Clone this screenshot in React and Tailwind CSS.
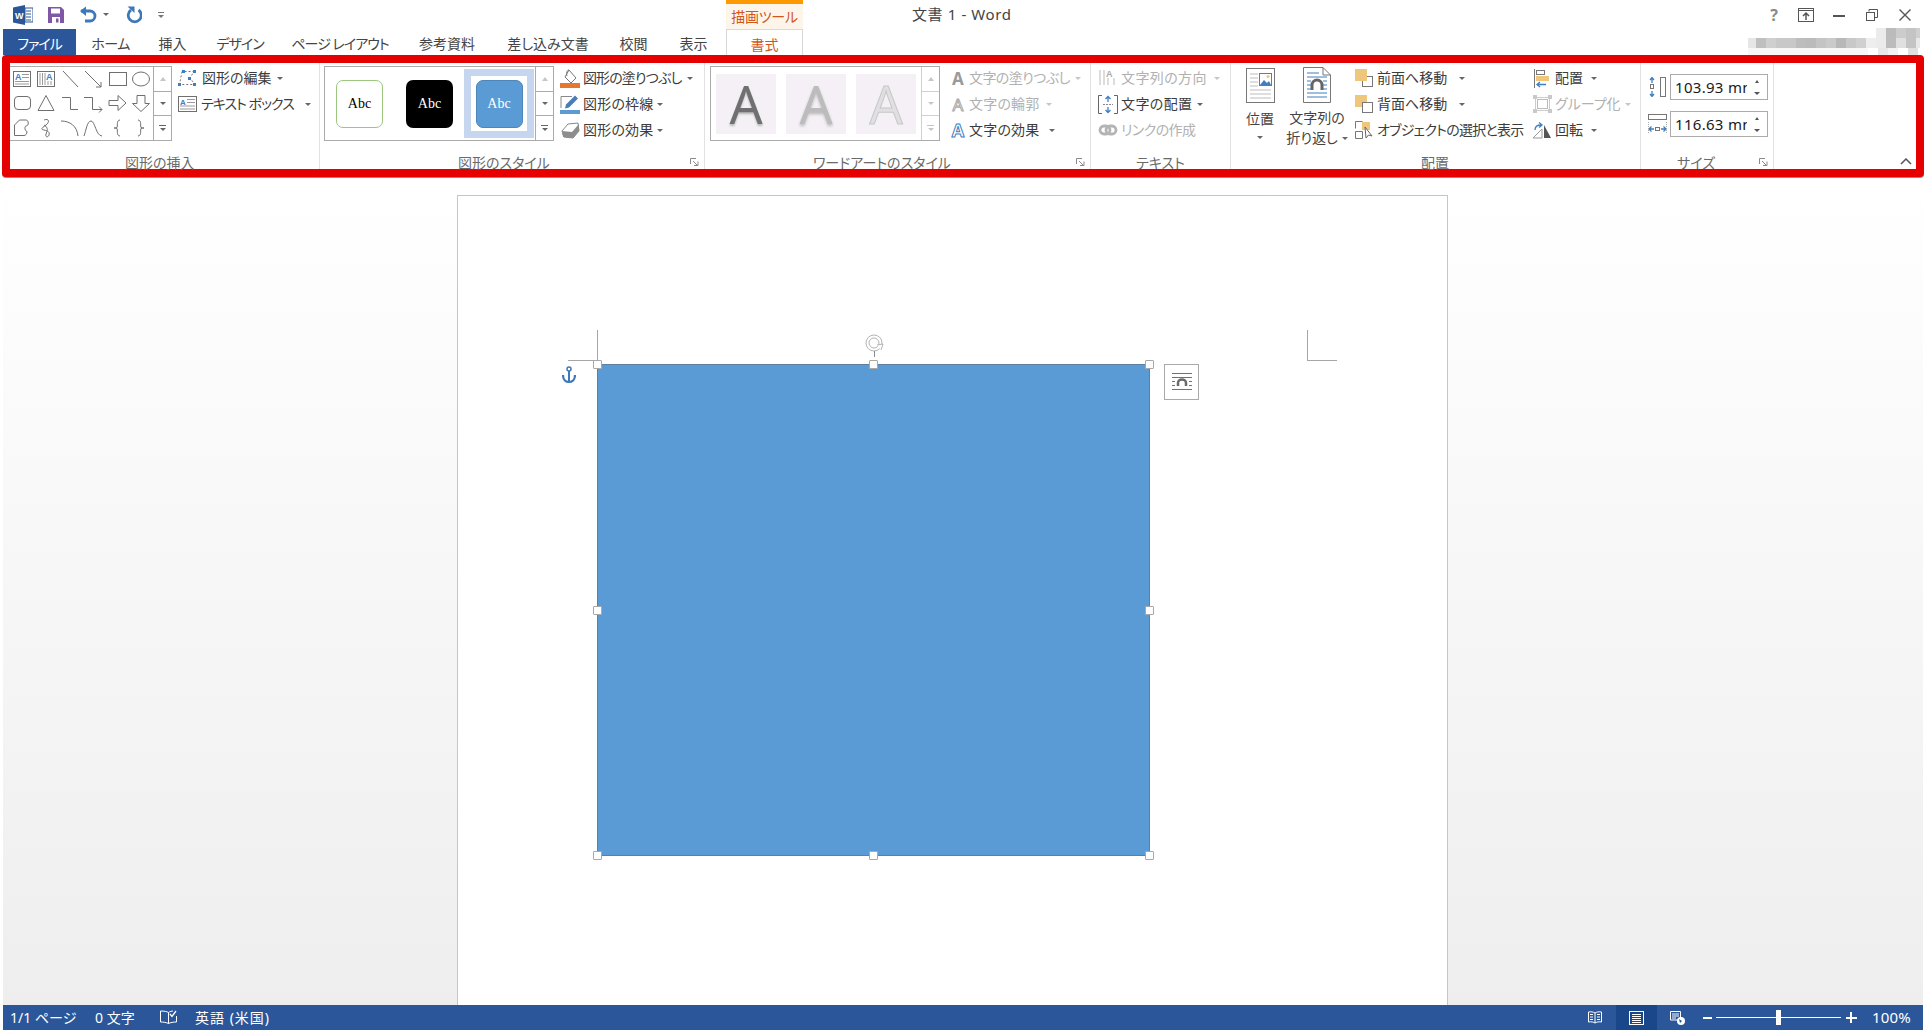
const GRAY = "#6f6f6f";
const BLUE = "#3f7fc1";
const TAN = "#eec67c";

function Svg({ w = 20, h = 20, children, className = "" }) {
  return (
    <svg width={w} height={h} viewBox={`0 0 ${w} ${h}`} fill="none" className={`shrink-0 ${className}`}>
      {children}
    </svg>
  );
}

function Caret({ className = "", color = "border-t-[#666666]" }) {
  return <span className={`inline-block w-0 h-0 border-x-[3px] border-x-transparent border-t-[3px] ${color} ${className}`} />;
}

// insert-shape gallery: one drawing per shape
const SHAPES = [
  <>
    <rect x="2.5" y="3.5" width="17" height="15" stroke={GRAY} />
    <text x="4" y="12" fontSize="9" fontWeight="700" fill={BLUE} fontFamily="Liberation Sans">A</text>
    <path d="M11 6.5h7M11 9.5h7M4 13.5h14M4 16h14" stroke="#999" />
  </>,
  <>
    <rect x="2.5" y="3.5" width="17" height="15" stroke={GRAY} />
    <text x="11" y="12" fontSize="9" fontWeight="700" fill={BLUE} fontFamily="Liberation Sans">A</text>
    <path d="M5 5v12M7.500 5v12M10 5v12M13 13v4M16 13v4" stroke="#999" />
  </>,
  <path d="M4 3l15 16" stroke={GRAY} />,
  <path d="M3 3l16 16M19 19v-5M19 19h-5" stroke={GRAY} />,
  <rect x="3.500" y="4.500" width="17" height="13" stroke={GRAY} />,
  <ellipse cx="11" cy="11" rx="8.500" ry="7" stroke={GRAY} />,
  <rect x="3.500" y="4.500" width="16" height="13" rx="3.500" stroke={GRAY} />,
  <path d="M11 3.500L3 18.500h16z" stroke={GRAY} />,
  <path d="M3 5.500h8.500v12H19" stroke={GRAY} />,
  <path d="M2 5.500h8.500v12H20M17 14.500l3 3-3 3" stroke={GRAY} />,
  <path d="M3 8.500h9v-5l8 7.500-8 7.500v-5H3z" stroke={GRAY} />,
  <path d="M7 3.500h8v8h4.500L11 19.500 2.500 11.500H7z" stroke={GRAY} />,
  <path d="M3.500 18.500V8l5-5h6.500c3 0 3 6 0 6-1.500 0-1.500 5 1 5.500 0 2-1 4-3 4z" stroke={GRAY} />,
  <path d="M9 3c5-2 6 2 2 5S5 12 9 13c4 1 6 2 5 5s-4 2-3-1 3-6-2-9" stroke={GRAY} />,
  <path d="M2 4c9 0 16 5 17 15" stroke={GRAY} />,
  <path d="M2 19C4 14 5 4 9 4s5 15 11 15" stroke={GRAY} />,
  <path d="M14 3c-4 0-2 7-3 7.500-1 .5-2 .5-3 .5 1 0 2 0 3 .5 1 .5-1 7.500 3 7.500" stroke={GRAY} />,
  <path d="M8 3c4 0 2 7 3 7.500 1 .5 2 .5 3 .5-1 0-2 0-3 .5-1 .5 1 7.500-3 7.500" stroke={GRAY} />,
];

function ScrollColumn() {
  return (
    <div className="w-[18px] flex flex-col border-l border-[#ababab]">
      <div className="flex-1 flex items-center justify-center">
        <span className="w-0 h-0 border-x-[3px] border-x-transparent border-b-[4px] border-b-[#c6c6c6]" />
      </div>
      <div className="flex-1 flex items-center justify-center border-y border-[#ababab]">
        <Caret />
      </div>
      <div className="flex-1 flex flex-col items-center justify-center gap-[2px]">
        <span className="w-[7px] h-px bg-[#666666]" />
        <Caret />
      </div>
    </div>
  );
}

function ScrollColumnOff() {
  return (
    <div className="w-[18px] flex flex-col border-l border-[#d0d0d0]">
      <div className="flex-1 flex items-center justify-center">
        <span className="w-0 h-0 border-x-[3px] border-x-transparent border-b-[4px] border-b-[#c6c6c6]" />
      </div>
      <div className="flex-1 flex items-center justify-center border-y border-[#d0d0d0]">
        <Caret color="border-t-[#c6c6c6]" />
      </div>
      <div className="flex-1 flex flex-col items-center justify-center gap-[2px]">
        <span className="w-[7px] h-px bg-[#c6c6c6]" />
        <Caret color="border-t-[#c6c6c6]" />
      </div>
    </div>
  );
}

function RowBtn({ icon, iconW = "w-[20px]", gap = "gap-[3px]", label, caret = true, caretGap = "ml-[4px]", off = false, track = "" }) {
  return (
    <div className={`h-[26px] flex items-center ${gap}`}>
      <span className={`${iconW} flex justify-center shrink-0`}>{icon}</span>
      <span className={`text-[14px] pb-[2px] whitespace-nowrap ${track} ${off ? "text-[#b1b1b1]" : "text-[#3c3c3c]"}`}>{label}</span>
      {caret && <Caret className={caretGap} color={off ? "border-t-[#c6c6c6]" : "border-t-[#666666]"} />}
    </div>
  );
}

function Group({ w, label, labelCenter, launcher, children, last }) {
  return (
    <div className={`${w} relative shrink-0 h-full ${last ? "" : "border-r border-[#e1e1e1]"}`}>
      <div className="h-[91px]">{children}</div>
      <div className={`absolute bottom-[-4px] h-[20px] flex justify-center text-[14px] leading-[20px] text-[#6a6a6a] whitespace-nowrap ${labelCenter}`}>{label}</div>
      {launcher && (
        <svg width="9" height="9" viewBox="0 0 9 9" fill="none" className="absolute right-[5px] bottom-[2px]">
          <path d="M.500 6V.500H6M3 3l4 4M4 7.500h4v-4" stroke="#8a8a8a" />
        </svg>
      )}
    </div>
  );
}

function AbcItem({ box, text }) {
  return (
    <div className={`w-[47px] h-[48px] rounded-[7px] flex items-center justify-center text-[14px] [font-family:'Liberation_Serif',serif] ${box} ${text}`}>
      Abc
    </div>
  );
}

function SpinField({ value, icon }) {
  return (
    <div className="flex items-center gap-[4px]">
      <span className="w-[18px] flex justify-center">{icon}</span>
      <div className="w-[98px] h-[26px] border border-[#ababab] bg-white flex items-center pl-[4px] overflow-hidden relative">
        <span className="text-[15px] text-[#1a1a1a] whitespace-nowrap tracking-[0.3px]">{value}</span>
        <div className="absolute right-0 top-0 bottom-0 w-[20px] bg-white flex flex-col items-center justify-center gap-[9px]">
          <span className="w-0 h-0 border-x-[2.500px] border-x-transparent border-b-[3px] border-b-[#555555]" />
          <Caret color="border-t-[#555555]" className="border-x-[2.500px]" />
        </div>
      </div>
    </div>
  );
}

const TABS = [
  ["w-[67px]", "ホーム", "tracking-[-0.500px]"],
  ["w-[57px]", "挿入", ""],
  ["w-[78px]", "デザイン", "tracking-[-1px]"],
  ["w-[122px]", "ページ レイアウト", "tracking-[-1px]"],
  ["w-[92px]", "参考資料", ""],
  ["w-[110px]", "差し込み文書", ""],
  ["w-[61px]", "校閲", ""],
  ["w-[59px]", "表示", ""],
];

const MOSAIC_MID = [
  "w-[8px] bg-[#e6e6e6]", "w-[10px] bg-[#bfbfbf]", "w-[10px] bg-[#cfcfcf]", "w-[10px] bg-[#c8c8c8]", "w-[10px] bg-[#c8c8c8]",
  "w-[10px] bg-[#bdbdbd]", "w-[10px] bg-[#bbbbbb]", "w-[10px] bg-[#c4c4c4]", "w-[10px] bg-[#cacaca]", "w-[10px] bg-[#b8b8b8]",
  "w-[10px] bg-[#c8c8c8]", "w-[10px] bg-[#d0d0d0]", "w-[10px] bg-[#eeeeee]", "w-[10px] bg-[#ebebeb]", "w-[10px] bg-[#bcbcbc]",
  "w-[10px] bg-[#e0e0e0]", "w-[10px] bg-[#c4c4c4]", "w-[4px] bg-[#e8e8e8]",
];

function Mosaic() {
  return (
    <div className="ml-auto mr-[8px] mt-[-1px] flex flex-col h-[27px] w-[172px]">
      <div className="h-[10px] flex justify-end">
        <span className="w-[10px] bg-[#ebebeb]" />
        <span className="w-[10px] bg-[#bbbbbb]" />
        <span className="w-[10px] bg-[#cccccc]" />
        <span className="w-[10px] bg-[#c4c4c4]" />
        <span className="w-[4px] bg-[#d0d0d0]" />
      </div>
      <div className="h-[10px] flex">
        {MOSAIC_MID.map((c, i) => (
          <span key={i} className={c} />
        ))}
      </div>
      <div className="h-[7px] flex justify-end">
        <span className="w-[120px] bg-[#f7f7f7]" />
        <span className="w-[10px] bg-[#ffffff]" />
        <span className="w-[10px] bg-[#e8e8e8]" />
        <span className="w-[10px] bg-[#f2f2f2]" />
        <span className="w-[10px] bg-[#ffffff]" />
        <span className="w-[10px] bg-[#e0e0e0]" />
        <span className="w-[2px] bg-[#ffffff]" />
      </div>
    </div>
  );
}

function Handle({ className }) {
  return <span className={`absolute w-[9px] h-[9px] bg-white border border-[#a8a8a8] rounded-[1px] ${className}`} />;
}

function WrapGlyph({ w = 22, h = 22, color = BLUE }) {
  return (
    <svg width={w} height={h} viewBox="0 0 22 22" fill="none">
      <path d="M1 2.500h20M1 6.500h20M1 10.500h3M18 10.500h3M1 14.500h3M18 14.500h3M1 18.500h20" stroke={color} />
      <path d="M7 15v-3a4 3.500 0 0 1 8 0v3" stroke="#6b6b6b" strokeWidth="2.500" />
    </svg>
  );
}

export default function App() {
  return (
    <div className="relative w-[1928px] h-[1030px] overflow-hidden bg-white flex flex-col font-['Noto_Sans','Noto_Sans_CJK_JP',sans-serif] [font-feature-settings:'palt'] text-[#444444]">
      {/* title bar */}
      <div className="h-[29px] shrink-0 flex items-start">
        <div className="w-[726px] h-full flex items-center relative pl-[13px]">
          <Svg w={20} h={20}>
            <path d="M0 2.500L12 0v20L0 17.500z" fill="#2b579a" />
            <path d="M12 3h8v14h-8z" fill="#fff" stroke="#2b579a" />
            <path d="M13 6h5M13 9h5M13 12h5M13 15h5" stroke="#2b579a" />
            <text x="2" y="14" fontSize="9" fontWeight="700" fill="#fff" fontFamily="Liberation Sans">W</text>
          </Svg>
          <Svg w={16} h={16} className="ml-[15px]">
            <path d="M0 0h13l3 3v13H0z" fill="#7e57a6" />
            <path d="M3 1.500h9v5H3z" fill="#fff" />
            <path d="M4 10h8v6H4z" fill="#fff" />
            <path d="M8 11.500h2.500v4H8z" fill="#7e57a6" />
          </Svg>
          <Svg w={19} h={17} className="ml-[15px]">
            <path d="M2 5h9a5 5 0 0 1 0 10H6" stroke="#3d78b8" strokeWidth="2.800" />
            <path d="M7 .500L1 5l6 5z" fill="#3d78b8" />
          </Svg>
          <Caret className="ml-[5px]" />
          <Svg w={17} h={19} className="ml-[16px]">
            <path d="M6 5a6.500 6.500 0 1 0 7.500 0" stroke="#3d78b8" strokeWidth="2.800" />
            <path d="M2.500 1.500h7v6.500z" fill="#3d78b8" />
          </Svg>
          <span className="ml-[16px] flex flex-col items-center gap-[2px]">
            <span className="w-[6px] h-px bg-[#777777]" />
            <Caret color="border-t-[#777777]" />
          </span>
        </div>
        <div className="w-[77px] h-full bg-[#fef5ea] border-t-4 border-[#ff9900] flex items-center justify-center text-[14px] tracking-[-0.300px] text-[#d2561a]">描画ツール</div>
        <div className="w-[109px]" />
        <div className="h-full w-[98px] flex items-center text-[15px] tracking-[0.600px] text-[#444444] whitespace-nowrap [font-feature-settings:normal]">文書 1 - Word</div>
        <div className="flex-1 h-full flex items-center justify-end pr-[17px]">
          <span className="text-[16px] font-bold text-[#8a8a8a] mr-[20px] leading-none">?</span>
          <Svg w={16} h={14} className="mr-[19px]">
            <rect x=".500" y=".500" width="15" height="13" stroke="#555" />
            <path d="M1 2.500h14" stroke="#555" />
            <path d="M8 12V5M5 8l3-3 3 3" stroke="#555" strokeWidth="1.500" />
          </Svg>
          <span className="w-[12px] h-[2px] bg-[#555555] mt-[3px] mr-[21px]" />
          <Svg w={12} h={12} className="mr-[21px]">
            <path d="M3 2.500V.500h8.500v8h-2.500" stroke="#555" />
            <rect x=".500" y="3.500" width="8" height="8" stroke="#555" />
          </Svg>
          <Svg w={12} h={12}>
            <path d="M.500.500l11 11M11.500.500l-11 11" stroke="#555" strokeWidth="1.400" />
          </Svg>
        </div>
      </div>

      {/* tabs */}
      <div className="h-[26px] shrink-0 flex pl-[3px] text-[14px] text-[#444444] leading-[30px]">
        <div className="w-[73px] bg-[#2b579a] text-white text-center tracking-[-1px]">ファイル</div>
        <div className="w-[1px]" />
        {TABS.map(([w, t, track]) => (
          <div key={t} className={`${w} ${track} text-center whitespace-nowrap`}>{t}</div>
        ))}
        <div className="w-[3px]" />
        <div className="w-[77px] bg-white border-x border-t border-[#d8d8d8] text-center text-[#d2561a]">書式</div>
        <Mosaic />
      </div>

      {/* ribbon */}
      <div className="relative z-10 h-[122px] shrink-0 ml-[2px] mr-[4px] border-8 border-[#e60000] rounded-[4px] bg-white flex shadow-[0_1px_0_#909090]">
        {/* 図形の挿入 */}
        <Group w="w-[310px]" label="図形の挿入" labelCenter="left-[115px]">
          <div className="flex items-start pt-[3px]">
            <div className="w-[162px] h-[75px] border-y border-r border-[#ababab] flex">
              <div className="w-[144px] grid grid-cols-6 grid-rows-3">
                {SHAPES.map((s, i) => (
                  <span key={i} className="flex items-center justify-center">
                    <Svg w={22} h={22}>{s}</Svg>
                  </span>
                ))}
              </div>
              <ScrollColumn />
            </div>
            <div className="ml-[6px] mt-[-1px]">
              <RowBtn
                label="図形の編集"
                gap="gap-[4px]"
                caretGap="ml-[1px]"
                icon={
                  <Svg w={20} h={18}>
                    <path d="M4 2.500L1.500 15.500H17L12 9l4-6.500z" stroke="#777" strokeDasharray="2 2" />
                    <path d="M0 14h3v3H0zM4 1h3v3H4zM15 1h3v3h-3zM10 8h3v3h-3zM15 14h3v3h-3z" fill={BLUE} />
                  </Svg>
                }
              />
              <RowBtn
                label="テキスト ボックス"
                track="tracking-[-1px]"
                gap="gap-[3px]"
                caretGap="ml-[8px]"
                icon={
                  <Svg w={20} h={16}>
                    <rect x=".500" y=".500" width="18" height="15" stroke={GRAY} />
                    <text x="2" y="8.500" fontSize="8" fontWeight="700" fill={BLUE} fontFamily="Liberation Sans">A</text>
                    <path d="M9 3.500h8M9 6.500h8M2 10h15M2 13h15" stroke="#999" />
                  </Svg>
                }
              />
            </div>
          </div>
        </Group>

        {/* 図形のスタイル */}
        <Group w="w-[385px]" label="図形のスタイル" labelCenter="left-[138px]" launcher>
          <div className="flex items-start pt-[3px] pl-[4px]">
            <div className="w-[230px] h-[75px] border border-[#ababab] flex">
              <div className="w-[211px] flex items-center pl-[11px]">
                <AbcItem box="bg-white border border-[#9bc87e]" text="text-black" />
                <div className="w-[23px]" />
                <AbcItem box="bg-black" text="text-white" />
                <div className="ml-[11px] w-[70px] h-[69px] border-[7px] border-[#c6d6ef] bg-white flex items-center justify-center">
                  <AbcItem box="bg-[#5b9bd5] border border-[#4d86b8]" text="text-white" />
                </div>
              </div>
              <ScrollColumn />
            </div>
            <div className="ml-[6px] mt-[-1px]">
              <RowBtn
                label="図形の塗りつぶし"
                track="tracking-[-0.900px]"
                caretGap="ml-[3px]"
                icon={
                  <Svg w={20} h={19}>
                    <path d="M9 1l7 8-5 5-6-6z" stroke="#777" fill="#fff" />
                    <path d="M9 1c-2 0-3 3-2 6" stroke="#777" />
                    <rect x="0" y="14" width="20" height="5" fill="#e7772f" />
                  </Svg>
                }
              />
              <RowBtn
                label="図形の枠線"
                track="tracking-[0.200px]"
                caretGap="ml-0"
                icon={
                  <Svg w={20} h={19}>
                    <path d="M1 13V1.500h11" stroke="#888" />
                    <path d="M15 .500l3 3-9 9-4 1 1-4z" fill="#4a7db8" />
                    <rect x="0" y="15" width="20" height="4" fill="#5b9bd5" />
                  </Svg>
                }
              />
              <RowBtn
                label="図形の効果"
                track="tracking-[0.200px]"
                caretGap="ml-0"
                icon={
                  <Svg w={19} h={17}>
                    <path d="M1 9l6-7 10-1 1 8-6 7-9-1z" fill="#fff" stroke="#888" />
                    <path d="M1 9l10 1 7-8v7l-6 7-10-1z" fill="#8d8d8d" />
                  </Svg>
                }
              />
            </div>
          </div>
        </Group>

        {/* ワードアートのスタイル */}
        <Group w="w-[386px]" label="ワードアートのスタイル" labelCenter="left-[108px]" launcher>
          <div className="flex items-start pt-[3px] pl-[5px]">
            <div className="w-[230px] h-[75px] border border-[#ababab] flex">
              <div className="w-[211px] flex items-center pl-[5px] gap-[10px]">
                <div className="w-[60px] h-[60px] bg-[#f4f0f6] flex items-center justify-center text-[52px] leading-none text-[#707070] [text-shadow:0_2px_2px_#bbbbbb]">A</div>
                <div className="w-[60px] h-[60px] bg-[#f4f0f6] flex items-center justify-center text-[52px] leading-none text-[#bcbcbc] [text-shadow:0_2px_3px_#bbbbbb]">A</div>
                <div className="w-[60px] h-[60px] bg-[#f4f0f6] flex items-center justify-center text-[52px] leading-none text-[#e2dfe3] [-webkit-text-stroke:1px_#c8c8c8]">A</div>
              </div>
              <ScrollColumnOff />
            </div>
            <div className="ml-[10px] mt-[-1px]">
              <RowBtn
                off
                label="文字の塗りつぶし"
                track="tracking-[-0.600px]"
                iconW="w-[16px]"
                caretGap="ml-[2px]"
                icon={<span className="text-[17px] font-bold leading-none text-[#9a9a9a]">A</span>}
              />
              <RowBtn
                off
                label="文字の輪郭"
                track="tracking-[0.200px]"
                iconW="w-[16px]"
                caretGap="ml-[3px]"
                icon={<span className="text-[17px] leading-none text-white [-webkit-text-stroke:1px_#aaaaaa]">A</span>}
              />
              <RowBtn
                label="文字の効果"
                track="tracking-[0.200px]"
                iconW="w-[16px]"
                caretGap="ml-[6px]"
                icon={<span className="text-[18px] font-bold leading-none text-white [-webkit-text-stroke:1px_#3f7fc1]">A</span>}
              />
            </div>
          </div>
        </Group>

        {/* テキスト */}
        <Group w="w-[140px]" label="テキスト" labelCenter="left-[45px]">
          <div className="pt-[2px] pl-[7px]">
            <RowBtn
              off
              label="文字列の方向"
              track="tracking-[0.400px]"
              caretGap="ml-[4px]"
              icon={
                <Svg w={20} h={18}>
                  <path d="M2 1v15M6 1v15M10 9v7M16 9v7" stroke="#bbb" />
                  <text x="8" y="8" fontSize="9" fontWeight="700" fill="#aaa" fontFamily="Liberation Sans">A</text>
                </Svg>
              }
            />
            <RowBtn
              label="文字の配置"
              track="tracking-[0.400px]"
              caretGap="ml-[1px]"
              icon={
                <Svg w={20} h={19}>
                  <path d="M4 .500H.500v18H4M16 .500h3.500v18H16" stroke="#666" />
                  <path d="M5 9.500h10" stroke="#888" strokeDasharray="2 1" />
                  <path d="M10 7V2M7.500 4L10 1.500 12.500 4M10 12v5M7.500 15l2.500 2.500 2.500-2.500" stroke={BLUE} strokeWidth="1.300" />
                </Svg>
              }
            />
            <RowBtn
              off
              caret={false}
              label="リンクの作成"
              track="tracking-[-0.600px]"
              icon={
                <Svg w={20} h={14}>
                  <rect x="2" y="3" width="10" height="8" rx="4" stroke="#b4b4b4" strokeWidth="2.800" />
                  <rect x="8" y="3" width="10" height="8" rx="4" stroke="#b4b4b4" strokeWidth="2.800" />
                </Svg>
              }
            />
          </div>
        </Group>

        {/* 配置 */}
        <Group w="w-[410px]" label="配置" labelCenter="left-[190px]">
          <div className="flex items-start pl-[11px] pt-[5px]">
            <div className="w-[36px] flex flex-col items-center">
              <svg width="29" height="35" viewBox="0 0 29 35" fill="none" className="shrink-0">
                <rect x=".500" y=".500" width="28" height="34" stroke="#777" />
                <path d="M4 6h8M4 10h8M4 14h8M4 18h8M4 22h21M4 26h21M4 30h21" stroke="#bdbdbd" />
                <rect x="13.500" y="5.500" width="12" height="12" stroke="#777" fill="#fff" />
                <path d="M14 17l4-5 3 3 2-2 2 4z" fill={BLUE} />
                <circle cx="22" cy="8.500" r="1.500" fill={TAN} />
              </svg>
              <span className="text-[14px] leading-[20px] mt-[6px]">位置</span>
              <Caret className="mt-[7px]" />
            </div>
            <div className="w-[66px] ml-[6px] flex flex-col items-center">
              <svg width="28" height="36" viewBox="0 0 28 36" fill="none" className="shrink-0 mt-[-1px]">
                <path d="M.500.500H20L27.500 8v27.500H.500z" stroke="#777" />
                <path d="M20 .500V8h7.500" stroke="#777" />
                <path d="M4 6h12M4 10h20M4 14h4M20 14h4M4 18h4M20 18h4M4 22h4M20 22h4M4 26h20M4 30h20" stroke={BLUE} />
                <path d="M9 23v-5a5 5 0 0 1 10 0v5" stroke="#666" strokeWidth="3" />
              </svg>
              <span className="text-[14px] leading-[20px] mt-[5px] whitespace-nowrap">文字列の</span>
              <span className="text-[14px] leading-[20px] whitespace-nowrap flex items-center">折り返し<Caret className="ml-[4px]" /></span>
            </div>
            <div className="w-[177px] ml-[5px] mt-[-3px]">
              <RowBtn
                label="前面へ移動"
                iconW="w-[18px]"
                gap="gap-[4px]"
                caretGap="ml-[8px]"
                icon={
                  <Svg w={18} h={18}>
                    <rect x="7.500" y="7.500" width="10" height="10" stroke="#777" />
                    <rect width="12" height="12" fill={TAN} />
                  </Svg>
                }
              />
              <RowBtn
                label="背面へ移動"
                iconW="w-[18px]"
                gap="gap-[4px]"
                caretGap="ml-[8px]"
                icon={
                  <Svg w={18} h={18}>
                    <rect width="12" height="12" fill={TAN} />
                    <rect x="7.500" y="7.500" width="10" height="10" fill="#fff" stroke="#777" />
                  </Svg>
                }
              />
              <RowBtn
                caret={false}
                label="オブジェクトの選択と表示"
                track="tracking-[-0.750px]"
                iconW="w-[18px]"
                gap="gap-[4px]"
                icon={
                  <Svg w={18} h={18}>
                    <path d="M.500.500h7M.500.500v7M.500 10.500h7v7h-7z" stroke="#777" />
                    <rect x="7" y="1" width="8" height="8" fill={TAN} />
                    <path d="M10 6l1 11 2.500-3 3.500 1z" fill="#fff" stroke="#666" />
                  </Svg>
                }
              />
            </div>
            <div className="mt-[-3px]">
              <RowBtn
                label="配置"
                caretGap="ml-[5px]"
                icon={
                  <Svg w={16} h={19}>
                    <path d="M.500 0v19" stroke="#777" />
                    <rect x="2.500" y="1.500" width="8" height="4" fill="#fff" stroke="#777" />
                    <rect x="2" y="7" width="13" height="5" fill={TAN} />
                    <path d="M12 15.500H3M6 13l-3 2.500L6 18" stroke={BLUE} strokeWidth="1.300" />
                  </Svg>
                }
              />
              <RowBtn
                off
                label="グループ化"
                caretGap="ml-[1px]"
                icon={
                  <Svg w={19} h={18}>
                    <rect x="4.500" y="4.500" width="10" height="9" stroke="#bbb" />
                    <rect x="2.500" y="2.500" width="14" height="13" stroke="#ccc" />
                    <path d="M0 0h4v4H0zM15 0h4v4h-4zM0 14h4v4H0zM15 14h4v4h-4z" fill="#c9c9c9" />
                  </Svg>
                }
              />
              <RowBtn
                label="回転"
                caretGap="ml-[5px]"
                icon={
                  <Svg w={20} h={18}>
                    <path d="M1 17L10 8v9z" stroke="#999" />
                    <path d="M12 17V4l7 13z" fill="#555" />
                    <path d="M3 9c0-3 2-5 6-5M7 1.500L10 4 7 6.500" stroke={BLUE} strokeWidth="1.300" />
                  </Svg>
                }
              />
            </div>
          </div>
        </Group>

        {/* サイズ */}
        <Group w="w-[133px]" label="サイズ" labelCenter="left-[36px]" launcher>
          <div className="pl-[7px] pt-[11px] flex flex-col gap-[11px]">
            <SpinField
              value="103.93 mm"
              icon={
                <Svg w={18} h={20}>
                  <path d="M4 1v5M2 3l2-2.500L6 3M4 19v-5M2 17l2 2.500L6 17" stroke={BLUE} strokeWidth="1.300" />
                  <rect x="2.500" y="7.500" width="3" height="4" stroke="#777" />
                  <rect x="12.500" y=".500" width="5" height="19" stroke="#777" />
                </Svg>
              }
            />
            <SpinField
              value="116.63 mm"
              icon={
                <Svg w={19} h={20}>
                  <rect x=".500" y=".500" width="18" height="5" stroke="#777" />
                  <path d="M1 15h5M3.500 12.500L1 15l2.500 2.500M18 15h-5M15.500 12.500L18 15l-2.500 2.500" stroke={BLUE} strokeWidth="1.300" />
                  <rect x="7.500" y="13.500" width="4" height="3" stroke="#777" />
                  <path d="M.500 8v11M18.500 8v11" stroke="#aaa" strokeDasharray="1 1" />
                </Svg>
              }
            />
          </div>
        </Group>

        <div className="flex-1 relative">
          <svg width="12" height="7" viewBox="0 0 12 7" fill="none" className="absolute right-[4px] bottom-[4px]">
            <path d="M1 6l5-5 5 5" stroke="#555" strokeWidth="1.500" />
          </svg>
        </div>
      </div>

      {/* document area */}
      <div className="flex-1 ml-[3px] mr-[5px] min-h-0 overflow-hidden bg-gradient-to-b from-white to-[#eeeeee] pl-[454px] pt-[18px]">
        <div className="relative w-[991px] h-[900px] bg-white border border-[#c6c6c6]">
          {/* crop marks */}
          <span className="absolute left-[139px] top-[134px] w-px h-[35px] bg-[#a6a6a6]" />
          <span className="absolute left-[110px] top-[164px] w-[29px] h-px bg-[#a6a6a6]" />
          <span className="absolute left-[849px] top-[134px] w-px h-[30px] bg-[#a6a6a6]" />
          <span className="absolute left-[849px] top-[164px] w-[30px] h-px bg-[#a6a6a6]" />

          {/* anchor */}
          <svg width="14" height="18" viewBox="0 0 14 18" fill="none" className="absolute left-[104px] top-[170px]">
            <circle cx="7" cy="3" r="2" stroke="#3d78b8" strokeWidth="1.500" />
            <path d="M7 5v11" stroke="#3d78b8" strokeWidth="2" />
            <path d="M1 9c0 5 3 7 6 7s6-2 6-7" stroke="#3d78b8" strokeWidth="2.200" />
          </svg>

          {/* rotate handle */}
          <svg width="22" height="24" viewBox="0 0 22 24" fill="none" className="absolute left-[406px] top-[137px]">
            <circle cx="10" cy="10" r="8" stroke="#b4b4b4" />
            <circle cx="10" cy="10" r="5" stroke="#b4b4b4" />
            <path d="M13 12l6-1-2 6" fill="#fff" stroke="#b4b4b4" />
            <path d="M10.500 18v6" stroke="#8a8a8a" />
          </svg>

          {/* selected shape */}
          <div className="absolute left-[139px] top-[168px] w-[553px] h-[492px] bg-[#5b9bd5] border border-[#5f7f9e]">
            <Handle className="left-[-5px] top-[-5px]" />
            <Handle className="left-[271px] top-[-5px]" />
            <Handle className="right-[-5px] top-[-5px]" />
            <Handle className="left-[-5px] top-[241px]" />
            <Handle className="right-[-5px] top-[241px]" />
            <Handle className="left-[-5px] bottom-[-5px]" />
            <Handle className="left-[271px] bottom-[-5px]" />
            <Handle className="right-[-5px] bottom-[-5px]" />
          </div>

          {/* layout options */}
          <div className="absolute left-[706px] top-[168px] w-[35px] h-[36px] bg-white border border-[#a9a9a9] flex items-center justify-center">
            <WrapGlyph />
          </div>
        </div>
      </div>

      {/* status bar */}
      <div className="h-[25px] shrink-0 ml-[3px] mr-[5px] bg-[#2b579a] flex items-center text-[14px] text-white relative">
        <span className="ml-[7px] w-[85px] whitespace-nowrap">1/1 ページ</span>
        <span className="w-[65px] whitespace-nowrap">0 文字</span>
        <Svg w={17} h={15}>
          <path d="M8.500 2.500C7 1.500 4 1 .500 1v11c3 0 6 .500 8 1.500V2.500zM8.500 2.500C10 1.500 12 1 13 1M16.500 6v6c-3 0-6 .500-8 1.500" stroke="#fff" />
          <path d="M10 4l2 2.500L16 1" stroke="#fff" strokeWidth="1.300" />
        </Svg>
        <span className="ml-[18px] whitespace-nowrap tracking-[1px] [font-feature-settings:normal]">英語 (米国)</span>
        <div className="ml-auto flex items-center h-full">
          <Svg w={14} h={14}>
            <path d="M7 2C5.500 1 3 .500.500 1v10c2.500-.500 5 0 6.500 1 1.500-1 4-1.500 6.500-1V1C11 .500 8.500 1 7 2zM7 2v10M2 3.500h3M2 6h3M2 8.500h3M9 3.500h3M9 6h3M9 8.500h3" stroke="#fff" />
          </Svg>
          <div className="ml-[14px] w-[41px] h-full bg-[#19478a] flex items-center justify-center">
            <Svg w={15} h={14}>
              <rect x=".500" y=".500" width="14" height="13" stroke="#fff" />
              <path d="M3 3.500h9M3 5.500h9M3 7.500h9M3 9.500h9M3 11.500h9" stroke="#fff" />
            </Svg>
          </div>
          <Svg w={15} h={14} className="ml-[13px]">
            <path d="M10 9H.500V.500h10V7" stroke="#fff" />
            <path d="M2 3h7M2 5h7M2 7h4" stroke="#fff" />
            <circle cx="11" cy="10" r="4" fill="#fff" />
            <path d="M9 8l3 2-2 2z" fill="#2b579a" />
          </Svg>
          <span className="ml-[18px] w-[9px] h-[2px] bg-white" />
          <div className="relative ml-[4px] w-[125px] h-px bg-white">
            <span className="absolute left-[60px] top-[-7px] w-[5px] h-[15px] bg-white" />
          </div>
          <span className="relative ml-[5px] w-[11px] h-[11px] flex items-center justify-center">
            <span className="absolute w-[11px] h-[2px] bg-white" />
            <span className="absolute w-[2px] h-[11px] bg-white" />
          </span>
          <span className="ml-[15px] mr-[12px] whitespace-nowrap text-[15px] tracking-[0.200px]">100%</span>
        </div>
      </div>
    </div>
  );
}
